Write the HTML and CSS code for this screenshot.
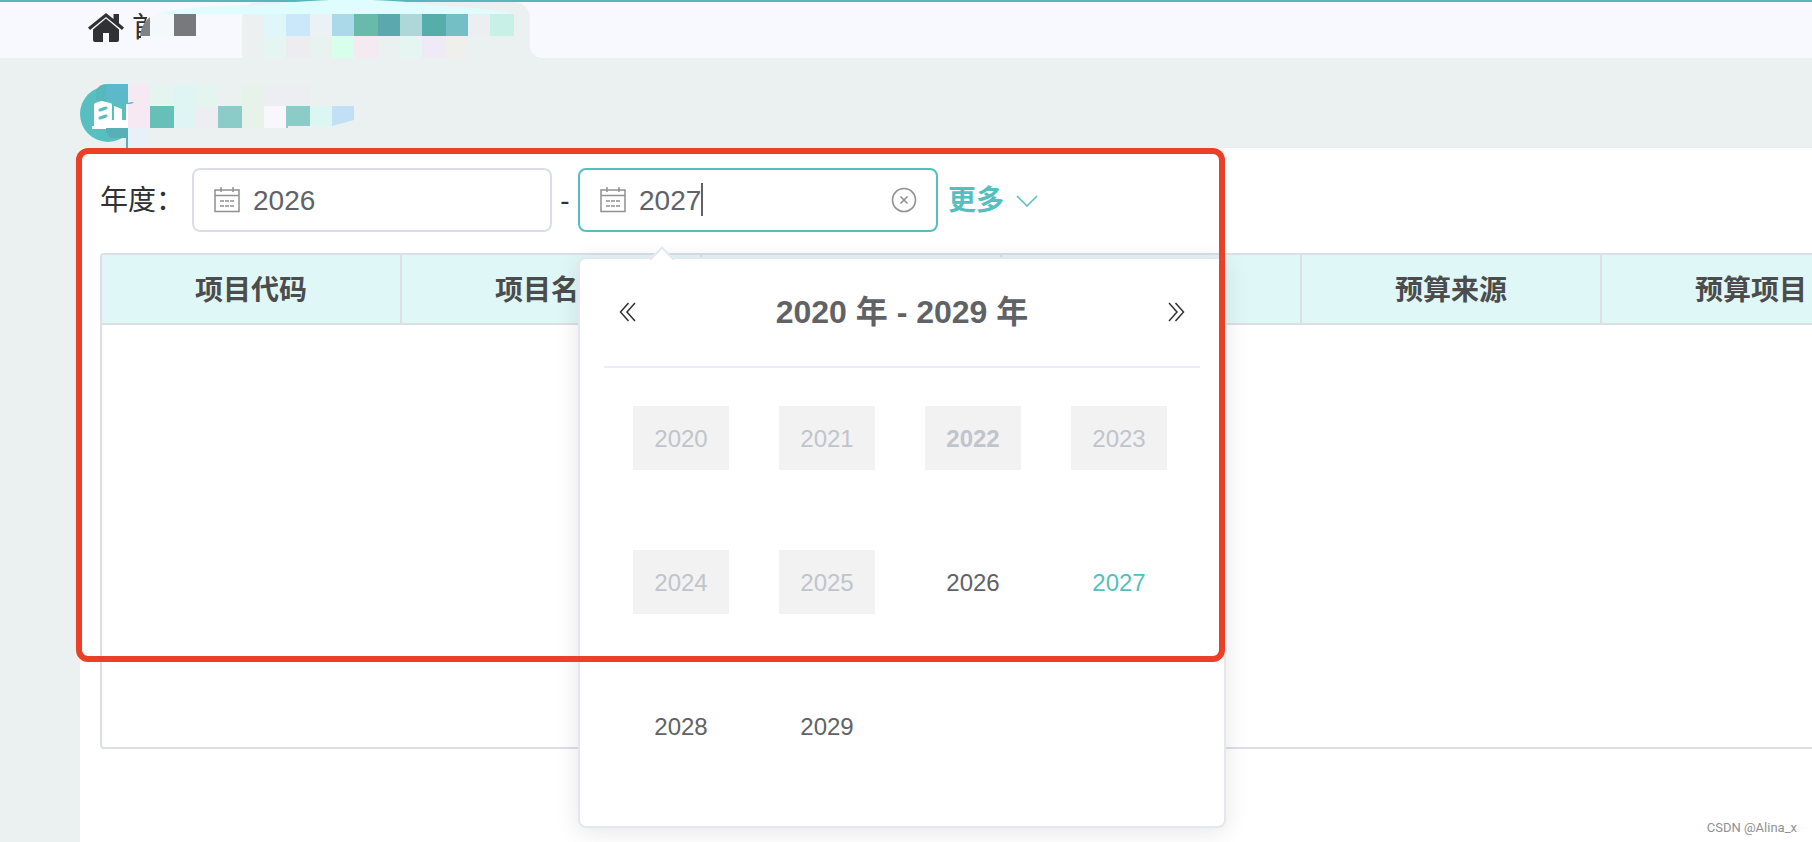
FILE: index.html
```html
<!DOCTYPE html>
<html lang="zh-CN">
<head>
<meta charset="utf-8">
<title>项目预算</title>
<link rel="stylesheet" href="styles.css">
</head>
<body>
<header class="topbar">
  <a class="home" href="#">
    <svg class="home-icon" viewBox="0 0 36 30" aria-hidden="true"><path d="M18 5.500 5 16.500V27q0 2 2 2h8v-9h6v9h8q2 0 2-2V16.500z"/><path d="M18 0 0 14.500l2 2.500L18 4l16 13 2-2.500-5-4.200V1h-5.500v5z"/></svg>
    <span>首</span>
  </a>
  <div class="tab"></div>
  <svg class="mosaic" width="560" height="150" viewBox="0 0 560 150" aria-hidden="true">
    <path fill="#f8f9fe" d="M150 10h92v48H141V36h-1z"/>
    <path fill="#808284" d="M140 36q1-12 10-19v19z"/>
    <path fill="#f3f8fb" d="M150 17q8-4 15-3h9v22h-24z"/>
    <path fill="#77797d" d="M174 14h22v22h-22z"/>
    <path fill="#dffcff" d="M155 14Q190 5 262 5Q300 1 330 0h42q34 1 60 5 50 3 84 9z"/>
    <path fill="#e0f7fa" d="M264 14h22v22h-22z"/><path fill="#cbe7fa" d="M286 14h24v22h-24z"/>
    <path fill="#ecf1f5" d="M310 14h22v22h-22z"/><path fill="#aadaea" d="M332 14h22v22h-22z"/>
    <path fill="#68bbab" d="M354 14h24v22h-24z"/><path fill="#5ba9ae" d="M378 14h22v22h-22z"/>
    <path fill="#aed7da" d="M400 14h22v22h-22z"/><path fill="#56aeaa" d="M422 14h24v22h-24z"/>
    <path fill="#74bfc6" d="M446 14h22v22h-22z"/><path fill="#ebeff2" d="M468 14h22v22h-22z"/>
    <path fill="#c9f0e6" d="M490 14h24v22h-24z"/>
    <path fill="#e5f5f2" d="M264 36h22v22h-22zM400 36h22v22h-22z"/><path fill="#edecf1" d="M286 36h24v22h-24z"/>
    <path fill="#e8f2ee" d="M310 36h22v22h-22z"/><path fill="#d8ffeb" d="M332 36h22v22h-22z"/>
    <path fill="#f5e9f2" d="M354 36h24v22h-24z"/><path fill="#efebf6" d="M422 36h24v22h-24z"/>
    <path fill="#efefeb" d="M446 36h22v22h-22z"/>
  </svg>
</header>
<div class="title">
  <svg class="title-art" width="300" height="64" viewBox="0 0 300 64" aria-hidden="true">
    <circle cx="28" cy="30" r="28" fill="#58bfc1"/>
    <path fill="#56b8b9" d="M16 6q4-6 10-6v20H16z"/><path fill="#5bb9cb" d="M26 0h22v18H26z"/>
    <path fill="#59afb8" d="M26 44h22v10H32q-6-2-6-8z"/>
    <path fill="#fff" d="M14 20q4-3 8-3l8 2q2 0 2 2v15h2V22l8 3v11h4V20h2v24H26v1H12v-3h2z"/>
    <path stroke="#58bfc1" stroke-width="3" stroke-linecap="round" d="m20 26 6-2M20 34l6-2" fill="none"/>
    <path fill="#56b2b8" d="M46 54h2v16h-2z"/>
    <path fill="#f6e9f3" d="M48 0h22v44H48z"/><path fill="#e8f0f8" d="M48 44h22v21H48z"/>
    <path fill="#58bfc1" d="M46 20q2-2 8-2-1 2-4 2z"/>
    <path fill="#e4f4ef" d="M70 0h24v22H70zM116 0h22v22h-22z"/><path fill="#def5f4" d="M94 0h22v44H94z"/>
    <path fill="#e7f2e9" d="M162 0h22v44h-22z"/><path fill="#edeef1" d="M184 0h46v22h-46zM116 22h22v22h-22z"/>
    <path fill="#67c0b8" d="M70 22h24v22H70z"/><path fill="#8bcbc8" d="M138 22h24v22h-24zM206 22h24v20h-22v2h-2z"/>
    <path fill="#f8f7fc" d="M184 22h22v22h-22z"/><path fill="#dcf6f4" d="M230 22h22v20h-22z"/>
    <path fill="#c1e0f5" d="M252 22h22v14l-22 6z"/>
  </svg>
</div>
<main class="card">
  <form class="filters">
    <label class="filter-label" for="from">年度：</label>
    <div class="field">
      <svg class="cal" viewBox="0 0 26 26" aria-hidden="true"><path d="M1 3h24v21.500H1zM1 8.500h24M7 0v5M19 0v5M6 14h4m1 0h4m1 0h4M6 19h4m1 0h4m1 0h4"/></svg>
      <input id="from" type="text" value="2026">
    </div>
    <span class="dash">-</span>
    <div class="field field-active">
      <svg class="cal" viewBox="0 0 26 26" aria-hidden="true"><path d="M1 3h24v21.500H1zM1 8.500h24M7 0v5M19 0v5M6 14h4m1 0h4m1 0h4M6 19h4m1 0h4m1 0h4"/></svg>
      <div class="entry"><input id="to" type="text" value="2027" aria-label="结束年度"><i class="caret"></i></div>
      <button class="clear" type="button" aria-label="清除"><svg viewBox="0 0 26 26"><circle cx="13" cy="13" r="11.500"/><path d="m9.500 9.500 7 7m0-7-7 7"/></svg></button>
      <section class="picker">
        <div class="picker-head">
          <button type="button" aria-label="前十年"><svg viewBox="0 0 18 20"><path d="M9.500 1 1.500 10l8 9M16 1 8 10l8 9"/></svg></button>
          <strong>2020 年 - 2029 年</strong>
          <button type="button" aria-label="后十年"><svg viewBox="0 0 18 20"><path d="m8.500 1 8 9-8 9M2 1l8 9-8 9"/></svg></button>
        </div>
        <div class="years">
          <button type="button" disabled>2020</button><button type="button" disabled>2021</button><button type="button" class="now" disabled>2022</button><button type="button" disabled>2023</button>
          <button type="button" disabled>2024</button><button type="button" disabled>2025</button><button type="button">2026</button><button type="button" class="picked">2027</button>
          <button type="button">2028</button><button type="button">2029</button>
        </div>
      </section>
    </div>
    <button class="more" type="button">更多<svg viewBox="0 0 22 12" aria-hidden="true"><path d="m1 1 10 10L21 1"/></svg></button>
  </form>
  <div class="table-wrap">
    <table>
      <thead><tr><th>项目代码</th><th>项目名称</th><th></th><th></th><th>预算来源</th><th>预算项目</th><th></th></tr></thead>
    </table>
  </div>
  <div class="marker"></div>
</main>
<div class="credit">CSDN @Alina_x</div>
</body>
</html>
```
FILE: styles.css
```css
* { box-sizing: border-box; }
body {
  margin: 0;
  min-height: 100vh;
  display: flex;
  flex-direction: column;
  overflow: hidden;
  background: #ebf1f1;
  color: #303133;
  font: 28px/40px "Liberation Sans", "Noto Sans CJK SC", sans-serif;
}
button, input { font: inherit; color: inherit; border: 0; padding: 0; background: none; }
svg { display: block; flex: none; }
.topbar {
  position: relative;
  display: flex;
  height: 58px;
  border-top: 2px solid #56b6ba;
  background: #f8f9fe;
}
.home {
  display: flex;
  align-items: center;
  gap: 8px;
  width: 242px;
  padding: 0 0 4px 88px;
  color: #303133;
  text-decoration: none;
}
.home-icon { width: 36px; height: 30px; fill: #303133; }
.tab {
  position: relative;
  width: 288px;
  background: #ebf1f1;
  border-radius: 16px 16px 0 0;
}
.tab::after {
  content: "";
  position: absolute;
  left: 100%;
  bottom: 0;
  width: 12px;
  height: 12px;
  background: radial-gradient(circle at 100% 0, #f8f9fe 12px, #ebf1f1 12px);
}
.mosaic { position: absolute; left: 0; top: -2px; }
.title { height: 90px; padding: 26px 0 0 80px; }
.title-art { overflow: visible; }
.card {
  position: relative;
  flex: 1;
  margin-left: 80px;
  padding: 20px 0 0 20px;
  background: #fff;
}
.filters { display: flex; align-items: center; height: 64px; }
.filter-label { width: 92px; padding-top: 2px; white-space: nowrap; }
.field {
  position: relative;
  display: flex;
  align-items: center;
  gap: 13px;
  width: 360px;
  height: 64px;
  padding: 0 19px 0 20px;
  border: 2px solid #dcdfe6;
  border-radius: 8px;
  color: #606266;
}
.field-active { border-color: #55bfc0; }
.field input { display: block; width: 200px; padding-top: 2px; outline: none; }
.cal { width: 26px; height: 26px; fill: none; stroke: #909090; stroke-width: 1.5; }
.entry { position: relative; flex: 1; }
.caret {
  position: absolute;
  left: 62px;
  top: 4px;
  width: 2px;
  height: 33px;
  background: #606266;
}
.clear svg { width: 26px; height: 26px; fill: none; stroke: #909090; stroke-width: 1.6; }
.dash { width: 26px; padding-top: 2px; text-align: center; font-weight: 500; }
.more {
  display: flex;
  align-items: center;
  gap: 12px;
  margin-left: 10px;
  padding-top: 2px;
  color: #55bfc0;
  font-weight: 700;
}
.more svg { width: 22px; height: 12px; fill: none; stroke: #55bfc0; stroke-width: 1.5; }
.table-wrap {
  height: 496px;
  margin-top: 21px;
  overflow: hidden;
  border: solid #dcdfe6;
  border-width: 2px 0 2px 2px;
  border-radius: 4px 0 0 4px;
}
table { width: 2100px; table-layout: fixed; border-collapse: separate; border-spacing: 0; }
th {
  height: 70px;
  padding: 3px 0 0;
  background: #e0f7f8;
  border: solid #dcdfe6;
  border-width: 0 2px 2px 0;
  color: #4c4c4c;
}
.picker {
  position: absolute;
  z-index: 2;
  left: -2px;
  top: 87px;
  width: 648px;
  padding: 0 24px 34px;
  border: 2px solid #e4e7ed;
  border-radius: 8px;
  background: #fff;
  box-shadow: 0 4px 24px rgba(0, 0, 0, .1);
}
.picker::before {
  content: "";
  position: absolute;
  left: 73px;
  top: -9px;
  width: 16px;
  height: 16px;
  border: solid #e4e7ed;
  border-width: 2px 0 0 2px;
  background: #fff;
  transform: rotate(45deg);
}
.picker-head {
  display: flex;
  align-items: center;
  justify-content: space-between;
  height: 109px;
  padding: 0 15px 2px;
  border-bottom: 2px solid #ebeef5;
  font-size: 32px;
}
.picker-head svg { width: 18px; height: 20px; fill: none; stroke: #303133; stroke-width: 1.5; }
.years {
  display: grid;
  grid-template-columns: repeat(4, 96px);
  gap: 80px 50px;
  padding: 38px 0 34px 29px;
}
.years button { height: 64px; padding-top: 2px; font-size: 24px; color: #606266; }
.years button:disabled { background: #f2f2f2; color: #c0c4cc; }
.years .now { font-weight: 700; }
.years .picked { color: #55bfc0; }
.marker {
  position: absolute;
  z-index: 3;
  left: -4px;
  top: 0;
  width: 1149px;
  height: 514px;
  border: 6px solid #ec4026;
  border-radius: 12px;
  pointer-events: none;
}
.credit {
  position: absolute;
  right: 15px;
  bottom: 5px;
  color: #909090;
  font: 13px/18px Roboto, sans-serif;
}
```
